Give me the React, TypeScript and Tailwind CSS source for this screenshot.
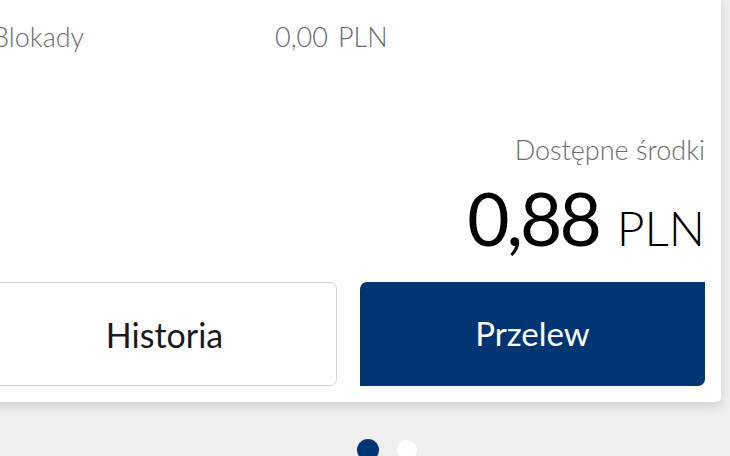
const font = { fontFamily: "Lato, 'Open Sans', sans-serif" };

export default function App() {
  return (
    <div className="h-[456px] w-[730px] overflow-hidden bg-[#efefef]" style={font}>
      <div className="-ml-[24px] mr-[9px] rounded-b-[5px] bg-white px-4 pb-[16px] pt-[17px] shadow-[0_4px_12px_rgba(0,0,0,0.14)]">
        <div className="flex h-[40px] items-center text-[27px] font-light leading-[40px] text-[#6b6b6b]">
          <span className="w-[283px]">Blokady</span>
          <span>
            0,00<span className="ml-[10px]">PLN</span>
          </span>
        </div>

        <div className="mt-[75px] text-right text-[27px] font-light leading-[36px] text-[#6b6b6b]">Dostępne środki</div>
        <div className="mt-[14px] text-right leading-none text-black">
          <span className="text-[73px] leading-none tracking-[-3px]">0,88</span>
          <span className="ml-[18px] text-[48px] font-light leading-none">PLN</span>
        </div>

        <div className="mt-[27px] grid grid-cols-2 gap-[23px]">
          <button className="flex h-[104px] items-center justify-center rounded-[7px] border border-[#d4d4d4] bg-white text-[34px] text-[#1a1a1a]">
            Historia
          </button>
          <button className="flex h-[104px] items-center justify-center rounded-tl-[7px] rounded-br-[7px] bg-[#003574] text-[33px] text-white">
            Przelew
          </button>
        </div>
      </div>

      <div className="ml-[357px] mt-[37px] flex items-center gap-[18px]">
        <span className="h-[22px] w-[22px] rounded-full bg-[#003574]" />
        <span className="h-[20px] w-[20px] rounded-full bg-white" />
      </div>
    </div>
  );
}
